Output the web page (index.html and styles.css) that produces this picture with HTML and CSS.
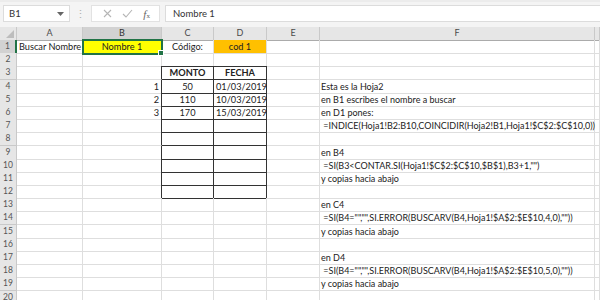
FILE: index.html
```html
<!DOCTYPE html>
<html lang="es">
<head>
<meta charset="utf-8">
<title>Hoja2</title>
<link rel="stylesheet" href="styles.css">
</head>
<body>
<div class="app">
  <div class="toolbar">
    <div class="namebox"><span>B1</span><svg class="dd" width="7" height="4" viewBox="0 0 7 4"><path d="M0 0h7L3.5 4z" fill="#666"/></svg></div>
    <div class="sep">⋮</div>
    <div class="fbtns">
      <svg width="9" height="9" viewBox="0 0 9 9"><path d="M1 1l7 7M8 1L1 8" stroke="#b5b5b5" stroke-width="1.1"/></svg>
      <svg width="11" height="9" viewBox="0 0 11 9"><path d="M1 5l3 3 6-7" stroke="#b5b5b5" stroke-width="1.1" fill="none"/></svg>
      <span class="fx"><i>f</i><small>x</small></span>
    </div>
    <div class="formula">Nombre 1</div>
  </div>

  <div class="sheet">
    <div class="row hdr"><div class="corner"><svg width="8" height="8" viewBox="0 0 8 8"><path d="M8 0v8H0z" fill="#bdbdbd"/></svg></div><div class="ch">A</div><div class="ch sel">B</div><div class="ch">C</div><div class="ch">D</div><div class="ch">E</div><div class="ch">F</div><div class="ch"></div></div>

    <div class="row"><div class="rh rsel">1</div><div class="c">Buscar Nombre</div><div class="c yellow ctr active">Nombre 1<span class="handle"></span></div><div class="c ctr">Código:</div><div class="c orange ctr">cod 1</div><div class="c"></div><div class="c f"></div><div class="c"></div></div>
    <div class="row"><div class="rh">2</div><div class="c"></div><div class="c"></div><div class="c tt"></div><div class="c tt"></div><div class="c"></div><div class="c f"></div><div class="c"></div></div>
    <div class="row"><div class="rh">3</div><div class="c"></div><div class="c tl"></div><div class="c t ctr b">MONTO</div><div class="c t ctr b">FECHA</div><div class="c"></div><div class="c f"></div><div class="c"></div></div>
    <div class="row"><div class="rh">4</div><div class="c"></div><div class="c tl r">1</div><div class="c t ctr">50</div><div class="c t r">01/03/2019</div><div class="c"></div><div class="c f">Esta es la Hoja2</div><div class="c"></div></div>
    <div class="row"><div class="rh">5</div><div class="c"></div><div class="c tl r">2</div><div class="c t ctr">110</div><div class="c t r">10/03/2019</div><div class="c"></div><div class="c f">en B1 escribes el nombre a buscar</div><div class="c"></div></div>
    <div class="row"><div class="rh">6</div><div class="c"></div><div class="c tl r">3</div><div class="c t ctr">170</div><div class="c t r">15/03/2019</div><div class="c"></div><div class="c f">en D1 pones:</div><div class="c"></div></div>
    <div class="row"><div class="rh">7</div><div class="c"></div><div class="c tl"></div><div class="c t"></div><div class="c t"></div><div class="c"></div><div class="c f"> =INDICE(Hoja1!B2:B10,COINCIDIR(Hoja2!B1,Hoja1!$C$2:$C$10,0))</div><div class="c"></div></div>
    <div class="row"><div class="rh">8</div><div class="c"></div><div class="c tl"></div><div class="c t"></div><div class="c t"></div><div class="c"></div><div class="c f"></div><div class="c"></div></div>
    <div class="row"><div class="rh">9</div><div class="c"></div><div class="c tl"></div><div class="c t"></div><div class="c t"></div><div class="c"></div><div class="c f">en B4</div><div class="c"></div></div>
    <div class="row"><div class="rh">10</div><div class="c"></div><div class="c tl"></div><div class="c t"></div><div class="c t"></div><div class="c"></div><div class="c f"> =SI(B3&lt;CONTAR.SI(Hoja1!$C$2:$C$10,$B$1),B3+1,"")</div><div class="c"></div></div>
    <div class="row"><div class="rh">11</div><div class="c"></div><div class="c tl"></div><div class="c t"></div><div class="c t"></div><div class="c"></div><div class="c f">y copias hacia abajo</div><div class="c"></div></div>
    <div class="row"><div class="rh">12</div><div class="c"></div><div class="c tl"></div><div class="c t"></div><div class="c t"></div><div class="c"></div><div class="c f"></div><div class="c"></div></div>
    <div class="row"><div class="rh">13</div><div class="c"></div><div class="c"></div><div class="c"></div><div class="c"></div><div class="c"></div><div class="c f">en C4</div><div class="c"></div></div>
    <div class="row"><div class="rh">14</div><div class="c"></div><div class="c"></div><div class="c"></div><div class="c"></div><div class="c"></div><div class="c f"> =SI(B4="","",SI.ERROR(BUSCARV(B4,Hoja1!$A$2:$E$10,4,0),""))</div><div class="c"></div></div>
    <div class="row"><div class="rh">15</div><div class="c"></div><div class="c"></div><div class="c"></div><div class="c"></div><div class="c"></div><div class="c f">y copias hacia abajo</div><div class="c"></div></div>
    <div class="row"><div class="rh">16</div><div class="c"></div><div class="c"></div><div class="c"></div><div class="c"></div><div class="c"></div><div class="c f"></div><div class="c"></div></div>
    <div class="row"><div class="rh">17</div><div class="c"></div><div class="c"></div><div class="c"></div><div class="c"></div><div class="c"></div><div class="c f">en D4</div><div class="c"></div></div>
    <div class="row"><div class="rh">18</div><div class="c"></div><div class="c"></div><div class="c"></div><div class="c"></div><div class="c"></div><div class="c f"> =SI(B4="","",SI.ERROR(BUSCARV(B4,Hoja1!$A$2:$E$10,5,0),""))</div><div class="c"></div></div>
    <div class="row"><div class="rh">19</div><div class="c"></div><div class="c"></div><div class="c"></div><div class="c"></div><div class="c"></div><div class="c f">y copias hacia abajo</div><div class="c"></div></div>
    <div class="row"><div class="rh">20</div><div class="c"></div><div class="c"></div><div class="c"></div><div class="c"></div><div class="c"></div><div class="c f"></div><div class="c"></div></div>
  </div>
</div>
</body>
</html>
```

FILE: styles.css
```css
* { box-sizing: border-box; }
html, body { margin: 0; padding: 0; background: #fff; }
body {
  width: 600px;
  height: 300px;
  overflow: hidden;
  font-family: Lato, "Liberation Sans", sans-serif;
  font-size: 9.2px;
  color: #222;
}
.app { width: 600px; height: 300px; overflow: hidden; }

.toolbar {
  height: 27px;
  background: #f4f4f4;
  display: flex;
  align-items: flex-start;
  padding-top: 3px;
  border-top: 2px solid #ececec;
}
.namebox {
  margin-left: 3px;
  width: 67px;
  height: 17px;
  background: #fff;
  border: 1px solid #dcdcdc;
  display: flex;
  align-items: center;
  justify-content: space-between;
  padding: 0 5px 0 5px;
  font-size: 9.5px;
  color: #333;
}
.sep {
  width: 21px;
  text-align: center;
  color: #b0b0b0;
  font-size: 11px;
  line-height: 17px;
}
.fbtns {
  width: 69px;
  height: 17px;
  background: #fff;
  border: 1px solid #e2e2e2;
  display: flex;
  align-items: center;
  justify-content: space-around;
  padding: 0 4px 0 6px;
}
.fx { font-family: "Liberation Serif", serif; color: #666; font-size: 11px; }
.fx small { font-size: 7px; }
.formula {
  margin-left: 5px;
  flex: 1;
  height: 17px;
  background: #fff;
  border: 1px solid #dcdcdc;
  border-right: 0;
  padding-left: 7px;
  line-height: 15px;
  font-size: 9.5px;
  color: #333;
}

.sheet { display: flex; flex-direction: column; }
.row {
  display: grid;
  grid-template-columns: 17px 66px 79px 52px 53px 53px 275px 5px;
  height: 13.2px;
}
.row.hdr { height: 13px; }

.corner, .ch, .rh {
  background: #e6e6e6;
  border-right: 1px solid #c9c9c9;
  border-bottom: 1px solid #c9c9c9;
  color: #4a4a4a;
  font-size: 9px;
  text-align: center;
  line-height: 12px;
}
.corner { display: flex; align-items: flex-end; justify-content: flex-end; padding: 0 2px 2px 0; }
.ch { border-bottom: 1px solid #ababab; }
.ch.sel { background: #d2d2d2; border-bottom: 2px solid #217346; color: #333; }
.rh { font-size: 8.5px; color: #555; line-height: 13px; }
.rh.rsel { background: #d2d2d2; border-right: 2px solid #217346; }

.c {
  border-right: 1px solid #dedede;
  border-bottom: 1px solid #dedede;
  line-height: 13px;
  padding: 0 2px;
  white-space: pre;
  overflow: visible;
  position: relative;
}
.ctr { text-align: center; }
.r { text-align: right; }
.b { font-weight: bold; }
.f { padding-left: 1px; font-size: 9px; }

.yellow { background: #ffff00; }
.orange { background: #ffc000; }
.active { outline: 2px solid #217346; outline-offset: -1px; z-index: 2; }
.handle {
  position: absolute;
  right: -3px;
  bottom: -3px;
  width: 4px;
  height: 4px;
  background: #217346;
  border: 1px solid #fff;
  box-sizing: content-box;
}

.tt { border-bottom: 1px solid #333; }
.tl { border-right: 1px solid #333; }
.t { border-right: 1px solid #333; border-bottom: 1px solid #333; }
```
